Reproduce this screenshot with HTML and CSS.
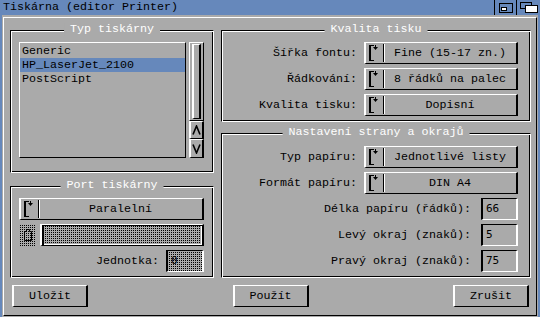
FILE: index.html
```html
<!DOCTYPE html>
<html lang="cs">
<head>
    <meta charset="UTF-8">
    <title>Tiskárna (editor Printer)</title>
    <link rel="stylesheet" href="styles.css">
</head>
<body>

<div class="window">
    <div class="titlebar">
        <span class="title">Tiskárna (editor Printer)</span>
        <div class="gadget">
            <svg width="14" height="10" viewBox="0 0 14 10">
                <rect x="0.5" y="0.5" width="13" height="9" fill="none" stroke="#000"/>
                <rect x="2.5" y="4.5" width="5" height="3" fill="#fff" stroke="#000"/>
            </svg>
        </div>
        <div class="gadget wide">
            <svg width="18" height="11" viewBox="0 0 18 11">
                <rect x="0.5" y="0.5" width="11" height="6" fill="#6688bb" stroke="#000"/>
                <rect x="5.5" y="3.5" width="12" height="7" fill="#fff" stroke="#000"/>
            </svg>
        </div>
    </div>

    <div class="client">
        <div class="root">
            <div class="columns">

                <div class="col">
                    <div class="group typ">
                        <span class="legend">Typ tiskárny</span>
                        <div class="list">
                            <div class="item">Generic</div>
                            <div class="item sel">HP_LaserJet_2100</div>
                            <div class="item">PostScript</div>
                        </div>
                        <div class="scroller">
                            <div class="track"><div class="knob raised"></div></div>
                            <div class="arrow raised up">
                                <svg width="9" height="10" viewBox="0 0 9 10"><polyline points="1,9.5 4.5,1 8,9.5" fill="none" stroke="#000" stroke-width="1.6"/></svg>
                            </div>
                            <div class="arrow raised down">
                                <svg width="9" height="10" viewBox="0 0 9 10"><polyline points="1,0.5 4.5,9 8,0.5" fill="none" stroke="#000" stroke-width="1.6"/></svg>
                            </div>
                        </div>
                    </div>

                    <div class="group port">
                        <span class="legend">Port tiskárny</span>
                        <div class="cycle raised full">
                            <div class="cycle-icon">
                                <svg width="10" height="16" viewBox="0 0 10 16">
                                    <rect x="0" y="0" width="2" height="16"/>
                                    <rect x="0" y="0" width="5" height="1"/>
                                    <rect x="0" y="15" width="5" height="1"/>
                                    <rect x="6" y="0" width="1" height="2"/>
                                    <polygon points="4,2 9,2 6.5,5"/>
                                </svg>
                            </div>
                            <div class="cycle-text">Paralelní</div>
                        </div>
                        <div class="line">
                            <div class="pop ghost">
                                <svg width="10" height="14" viewBox="0 0 10 14">
                                    <path d="M1.5 3.5 H3.5 V1.5 H6.5 V3.5 H8.5 V12.5 H1.5 Z" fill="none" stroke="#000"/>
                                </svg>
                            </div>
                            <div class="str ghost wide-str"></div>
                        </div>
                        <div class="row">
                            <span class="label">Jednotka:</span>
                            <div class="str ghost unit">0</div>
                        </div>
                    </div>
                </div>

                <div class="col">
                    <div class="group kvalita">
                        <span class="legend">Kvalita tisku</span>
                        <div class="row">
                            <span class="label">Šířka fontu:</span>
                            <div class="cycle raised">
                                <div class="cycle-icon">
                                    <svg width="10" height="16" viewBox="0 0 10 16"><rect x="0" y="0" width="2" height="16"/><rect x="0" y="0" width="5" height="1"/><rect x="0" y="15" width="5" height="1"/><rect x="6" y="0" width="1" height="2"/><polygon points="4,2 9,2 6.5,5"/></svg>
                                </div>
                                <div class="cycle-text">Fine (15-17 zn.)</div>
                            </div>
                        </div>
                        <div class="row">
                            <span class="label">Řádkování:</span>
                            <div class="cycle raised">
                                <div class="cycle-icon">
                                    <svg width="10" height="16" viewBox="0 0 10 16"><rect x="0" y="0" width="2" height="16"/><rect x="0" y="0" width="5" height="1"/><rect x="0" y="15" width="5" height="1"/><rect x="6" y="0" width="1" height="2"/><polygon points="4,2 9,2 6.5,5"/></svg>
                                </div>
                                <div class="cycle-text">8 řádků na palec</div>
                            </div>
                        </div>
                        <div class="row">
                            <span class="label">Kvalita tisku:</span>
                            <div class="cycle raised">
                                <div class="cycle-icon">
                                    <svg width="10" height="16" viewBox="0 0 10 16"><rect x="0" y="0" width="2" height="16"/><rect x="0" y="0" width="5" height="1"/><rect x="0" y="15" width="5" height="1"/><rect x="6" y="0" width="1" height="2"/><polygon points="4,2 9,2 6.5,5"/></svg>
                                </div>
                                <div class="cycle-text">Dopisní</div>
                            </div>
                        </div>
                    </div>

                    <div class="group nastaveni">
                        <span class="legend">Nastavení strany a okrajů</span>
                        <div class="row">
                            <span class="label">Typ papíru:</span>
                            <div class="cycle raised">
                                <div class="cycle-icon">
                                    <svg width="10" height="16" viewBox="0 0 10 16"><rect x="0" y="0" width="2" height="16"/><rect x="0" y="0" width="5" height="1"/><rect x="0" y="15" width="5" height="1"/><rect x="6" y="0" width="1" height="2"/><polygon points="4,2 9,2 6.5,5"/></svg>
                                </div>
                                <div class="cycle-text">Jednotlivé listy</div>
                            </div>
                        </div>
                        <div class="row">
                            <span class="label">Formát papíru:</span>
                            <div class="cycle raised">
                                <div class="cycle-icon">
                                    <svg width="10" height="16" viewBox="0 0 10 16"><rect x="0" y="0" width="2" height="16"/><rect x="0" y="0" width="5" height="1"/><rect x="0" y="15" width="5" height="1"/><rect x="6" y="0" width="1" height="2"/><polygon points="4,2 9,2 6.5,5"/></svg>
                                </div>
                                <div class="cycle-text">DIN A4</div>
                            </div>
                        </div>
                        <div class="row">
                            <span class="label num-label">Délka papíru (řádků):</span>
                            <div class="str">66</div>
                        </div>
                        <div class="row">
                            <span class="label num-label">Levý okraj (znaků):</span>
                            <div class="str">5</div>
                        </div>
                        <div class="row">
                            <span class="label num-label">Pravý okraj (znaků):</span>
                            <div class="str">75</div>
                        </div>
                    </div>
                </div>

            </div>

            <div class="buttons">
                <div class="btn raised">Uložit</div>
                <div class="btn raised">Použít</div>
                <div class="btn raised">Zrušit</div>
            </div>
        </div>
    </div>
</div>

</body>
</html>
```

FILE: styles.css
```css
body {
    margin: 0;
    font-family: "Liberation Mono", "DejaVu Sans Mono", monospace;
    font-size: 11.67px;
    color: #000;
    background: #aaaaaa;
}
.window {
    width: 540px;
    height: 317px;
    background: #6688bb;
    display: flex;
    flex-direction: column;
}
.titlebar {
    height: 15px;
    display: flex;
}
.title {
    flex: 1;
    padding-left: 3px;
    line-height: 15px;
}
.gadget {
    width: 21px;
    border-left: 1px solid #000;
    display: flex;
    align-items: center;
    justify-content: center;
}
.gadget.wide { width: 23px; }

.client {
    flex: 1;
    margin: 0 2px;
    padding: 2px 1px 1px;
    background: #aaaaaa;
    display: flex;
}
.root {
    flex: 1;
    border: 1px solid;
    border-color: #fff #000 #000 #fff;
    padding: 12px 5px 8px 6px;
    display: flex;
    flex-direction: column;
    gap: 7px;
}
.columns {
    display: grid;
    grid-template-columns: 204px 310px;
    column-gap: 7px;
    height: 248px;
}
.col {
    display: flex;
    flex-direction: column;
}

/* etched group frame */
.group {
    position: relative;
    box-sizing: border-box;
    border: 1px solid;
    border-color: #000 #fff #fff #000;
    box-shadow: inset 1px 1px #fff, inset -1px -1px #000;
}
.legend {
    position: absolute;
    top: -8px;
    left: 50%;
    transform: translateX(-50%);
    padding: 0 6px;
    background: #aaaaaa;
    color: #fff;
    line-height: 13px;
    white-space: nowrap;
}

.raised {
    box-sizing: border-box;
    border-style: solid;
    border-width: 1px 2px;
    border-color: #fff #000 #000 #fff;
}

.typ {
    height: 143px;
    padding: 11px 9px 0 8px;
    display: flex;
    gap: 3px;
}
.list {
    width: 167px;
    height: 116px;
    box-sizing: border-box;
    border: 1px solid;
    border-color: #fff #000 #000 #fff;
    padding-top: 1px;
}
.item {
    height: 14px;
    line-height: 14px;
    padding-left: 2px;
}
.item.sel { background: #6688bb; }

.scroller {
    width: 15px;
    display: flex;
    flex-direction: column;
}
.track {
    height: 79px;
    box-sizing: border-box;
    border: 1px solid;
    border-color: #fff #000 #000 #fff;
    padding: 1px 2px;
}
.knob { height: 100%; }
.arrow {
    display: flex;
    align-items: center;
    justify-content: center;
}
.arrow.up { height: 18px; }
.arrow.down { height: 19px; }

.port {
    height: 92px;
    margin-top: 13px;
    padding: 11px 9px 0 8px;
    display: flex;
    flex-direction: column;
    gap: 4px;
}
.kvalita {
    height: 92px;
    padding: 11px 12px 0 0;
    display: flex;
    flex-direction: column;
    gap: 4px;
}
.nastaveni {
    height: 145px;
    margin-top: 11px;
    padding: 12px 12px 0 0;
    display: flex;
    flex-direction: column;
    gap: 4px;
}

.row {
    height: 22px;
    display: flex;
    justify-content: flex-end;
    align-items: center;
}
.label { margin-right: 7px; }
.label.num-label { margin-right: 10px; }
.line {
    height: 22px;
    display: flex;
    gap: 4px;
}

.cycle {
    width: 154px;
    height: 22px;
    display: flex;
}
.cycle.full { width: 185px; }
.cycle-icon {
    width: 18px;
    box-sizing: border-box;
    margin: 1px 0;
    padding-left: 3px;
    border-right: 1px solid #000;
    box-shadow: 1px 0 #fff;
    display: flex;
    align-items: center;
}
.cycle-text {
    flex: 1;
    text-align: center;
    line-height: 20px;
}

.str {
    width: 37px;
    height: 22px;
    box-sizing: border-box;
    border-style: solid;
    border-width: 1px 2px;
    border-color: #000 #fff #fff #000;
    padding-left: 3px;
    line-height: 20px;
    font-family: "DejaVu Sans Mono", monospace;
    font-size: 11px;
}
.str.wide-str {
    flex: 1;
    border-color: #fff #000 #000 #fff;
    box-shadow: inset 2px 1px #000, inset -1px -1px #fff;
}
.str.unit { width: 38px; }

/* ghosted (disabled) fill */
.ghost {
    background: conic-gradient(from 90deg at 1px 1px, #000 0 90deg, #aaaaaa 0) 0 0 / 2px 2px;
}
.pop {
    width: 17px;
    box-sizing: border-box;
    display: flex;
    align-items: center;
    justify-content: center;
}

.buttons {
    height: 22px;
    padding: 0 2px;
    display: flex;
    justify-content: space-between;
}
.btn {
    width: 76px;
    text-align: center;
    line-height: 20px;
}
```
